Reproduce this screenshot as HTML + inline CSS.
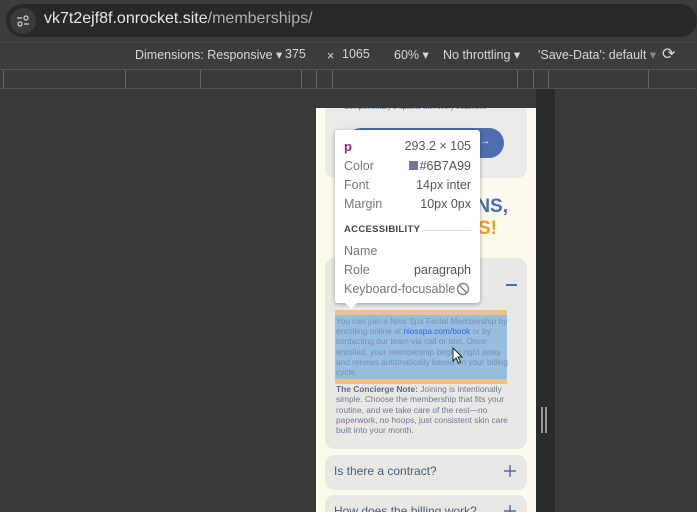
<!DOCTYPE html>
<html><head><meta charset="utf-8"><style>
*{margin:0;padding:0;box-sizing:border-box}
body{width:697px;height:512px;overflow:hidden;background:#3a3a3a;font-family:"Liberation Sans",sans-serif;position:relative}
.a{position:absolute}
.ttrow{position:absolute;left:9px;right:9px;font-size:12.5px;color:#555;display:flex;justify-content:space-between}
.ttrow span:first-child{color:#777}
.t{white-space:nowrap}
</style></head><body>
<div class="a" style="left:0;top:0;width:697px;height:42px;background:#3c3c3c"></div>
<div class="a" style="left:6px;top:4px;width:691px;height:33px;background:#282828;border-radius:17px"></div>
<div class="a" style="left:10px;top:8px;width:26px;height:26px;border-radius:13px;background:#3a3a3a"></div>
<svg class="a" style="left:16px;top:14px" width="14" height="14" viewBox="0 0 14 14"><g stroke="#ccc" stroke-width="1.3" fill="none"><line x1="1" y1="4" x2="6" y2="4"/><circle cx="10" cy="4" r="2"/><circle cx="4" cy="10" r="2"/><line x1="8" y1="10" x2="13" y2="10"/></g></svg>
<div class="a" style="left:44px;top:10px;font-size:16px;color:#e8e8e8">vk7t2ejf8f.onrocket.site<span style="color:#b0b0b0">/memberships/</span></div>
<div class="a" style="left:0;top:42px;width:697px;height:27px;background:#3c3c3c;border-top:1px solid #4a4a4a"></div>
<div class="a" style="left:0;top:47px;width:697px;font-size:12.5px;color:#d8d8d8;white-space:pre"><span class="a" style="left:135px">Dimensions: Responsive ▾</span><span class="a" style="left:285px">375</span><span class="a" style="left:327px;top:2px">×</span><span class="a" style="left:342px">1065</span><span class="a" style="left:394px">60% ▾</span><span class="a" style="left:443px">No throttling ▾</span><span class="a" style="left:538px">'Save-Data': default <span style="color:#888">▾</span></span><span class="a" style="left:662px;font-size:16px;top:-3px">⟳</span></div>
<div class="a" style="left:0;top:69px;width:697px;height:20px;background:#3a3a3a;border-top:1px solid #555;border-bottom:1px solid #555"></div>
<div class="a" style="left:3px;top:70px;width:1px;height:18px;background:#666"></div>
<div class="a" style="left:125px;top:70px;width:1px;height:18px;background:#666"></div>
<div class="a" style="left:200px;top:70px;width:1px;height:18px;background:#666"></div>
<div class="a" style="left:301px;top:70px;width:1px;height:18px;background:#666"></div>
<div class="a" style="left:316px;top:70px;width:1px;height:18px;background:#666"></div>
<div class="a" style="left:332px;top:70px;width:1px;height:18px;background:#666"></div>
<div class="a" style="left:517px;top:70px;width:1px;height:18px;background:#666"></div>
<div class="a" style="left:533px;top:70px;width:1px;height:18px;background:#666"></div>
<div class="a" style="left:548px;top:70px;width:1px;height:18px;background:#666"></div>
<div class="a" style="left:648px;top:70px;width:1px;height:18px;background:#666"></div>
<!-- page -->
<div class="a" style="left:316px;top:108px;width:220px;height:404px;background:#fbfaed;overflow:hidden">
 <div class="a" style="left:9px;top:-10px;width:202px;height:80px;background:#ebebe7;border-radius:10px"></div>
 <div class="a t" style="left:28px;top:-4px;font-size:7px;color:#4a66a8">Complimentary 3 upsells with every treatment</div>
 <div class="a" style="left:30px;top:20px;width:158px;height:30px;background:#4f6eb0;border-radius:15px;color:#fff;font-size:10px;text-align:right;padding:8px 14px 0 0">→</div>
 <div class="a" style="left:24px;top:86px;width:168px;height:50px;overflow:hidden">
  <div class="a t" style="right:0;top:2px;font-size:19px;font-weight:bold;color:#4a6bb0">MEMBERSHIPS, PLANS,</div>
  <div class="a t" style="right:11px;top:24px;font-size:19px;font-weight:bold;color:#f0a020">AND SAVINGS!</div>
 </div>
 <div class="a" style="left:9px;top:150px;width:202px;height:191px;background:#e8e8e4;border-radius:10px"></div>
 <div class="a" style="left:190px;top:176px;width:11px;height:1.5px;background:#4a6bb0"></div>
 <div class="a" style="left:19px;top:202px;width:172px;height:74px;background:#f4c08a"></div>
 <div class="a t" style="left:19px;top:207px;width:172px;height:64px;background:#97bde0;font-size:8.3px;line-height:10.2px;color:#7a8fb4;padding:1px 1px">You can join a Nios Spa Facial Membership by<br>enrolling online at <span style="color:#3a5ee0">niosspa.com/book</span> or by<br>contacting our team via call or text. Once<br>enrolled, your membership begins right away<br>and renews automatically based on your billing<br>cycle.</div>
 <div class="a t" style="left:20px;top:276px;font-size:8.4px;line-height:10.3px;color:#6b7a99"><b style="color:#5d6a88">The Concierge Note:</b> Joining is intentionally<br>simple. Choose the membership that fits your<br>routine, and we take care of the rest—no<br>paperwork, no hoops, just consistent skin care<br>built into your month.</div>
 <div class="a" style="left:9px;top:347px;width:202px;height:35px;background:#e8e8e4;border-radius:10px"></div>
 <div class="a t" style="left:18px;top:356px;font-size:12px;color:#4a5a80">Is there a contract?</div>
 <svg class="a" style="left:188px;top:357px" width="12" height="12" viewBox="0 0 12 12"><path d="M6 0V12M0 6H12" stroke="#4a6bb0" stroke-width="1.4"/></svg>
 <div class="a" style="left:9px;top:387px;width:202px;height:35px;background:#e8e8e4;border-radius:10px"></div>
 <div class="a t" style="left:18px;top:396px;font-size:12px;color:#4a5a80">How does the billing work?</div>
 <svg class="a" style="left:188px;top:397px" width="12" height="12" viewBox="0 0 12 12"><path d="M6 0V12M0 6H12" stroke="#4a6bb0" stroke-width="1.4"/></svg>
</div>
<div class="a" style="left:536px;top:89px;width:19px;height:423px;background:#2a2b2b"></div>
<div class="a" style="left:541px;top:407px;width:2px;height:26px;background:#999"></div>
<div class="a" style="left:545px;top:407px;width:2px;height:26px;background:#999"></div>
<!-- cursor -->
<svg class="a" style="left:452px;top:347px" width="12" height="18" viewBox="0 0 12 18"><path d="M1 1 L1 14 L4 11 L6.5 16 L8.5 15 L6 10 L10 10 Z" fill="#fff" stroke="#222" stroke-width="1"/></svg>
<!-- tooltip -->
<div class="a" style="left:335px;top:130px;width:145px;height:173px;background:#fff;border-radius:3px;box-shadow:0 1px 4px rgba(0,0,0,.35)">
 <div class="ttrow" style="top:9px"><span style="color:#9a1a9a;font-weight:bold;font-size:13px">p</span><span>293.2 × 105</span></div>
 <div class="ttrow" style="top:29px"><span>Color</span><span><span style="display:inline-block;width:9px;height:9px;background:#6b7a99;margin-right:2px"></span>#6B7A99</span></div>
 <div class="ttrow" style="top:48px"><span>Font</span><span>14px inter</span></div>
 <div class="ttrow" style="top:67px"><span>Margin</span><span>10px 0px</span></div>
 <div class="a" style="left:9px;top:94px;font-size:9.5px;font-weight:bold;color:#444;letter-spacing:.3px">ACCESSIBILITY</div>
 <div class="a" style="left:88px;top:100px;width:48px;height:1px;background:#ddd"></div>
 <div class="ttrow" style="top:114px"><span>Name</span><span></span></div>
 <div class="ttrow" style="top:133px"><span>Role</span><span>paragraph</span></div>
 <div class="ttrow" style="top:152px"><span>Keyboard-focusable</span><span></span></div>
 <svg class="a" style="left:121px;top:152px" width="14" height="14" viewBox="0 0 14 14"><circle cx="7" cy="7" r="5.5" fill="none" stroke="#888" stroke-width="1.4"/><line x1="3" y1="3" x2="11" y2="11" stroke="#888" stroke-width="1.4"/></svg>
</div>
<div class="a" style="left:344px;top:302px;width:0;height:0;border-left:7px solid transparent;border-right:7px solid transparent;border-top:7px solid #fff"></div>
</body></html>
